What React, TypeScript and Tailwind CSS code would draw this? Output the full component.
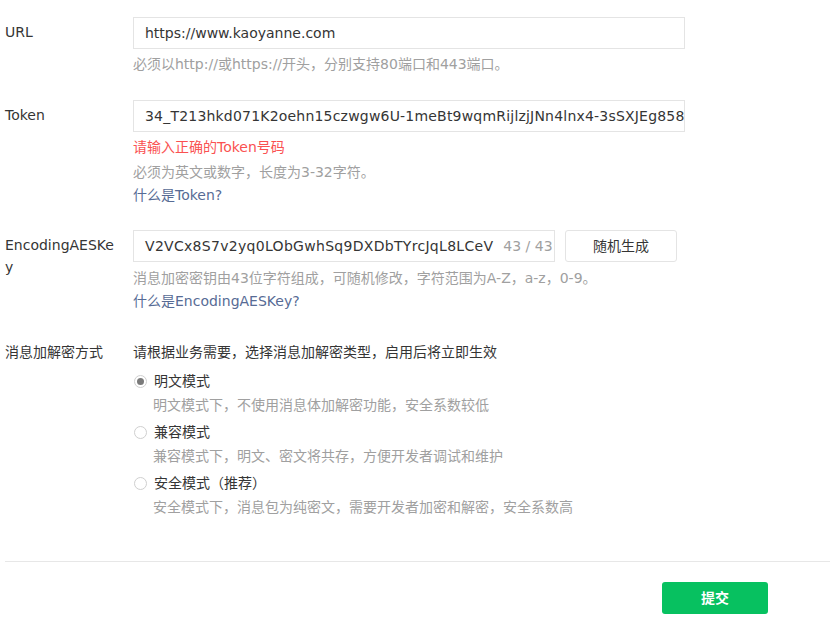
const font = { fontFamily: '"DejaVu Sans", "Noto Sans CJK SC", sans-serif' }

const modes = [
  { label: '明文模式', desc: '明文模式下，不使用消息体加解密功能，安全系数较低', checked: true },
  { label: '兼容模式', desc: '兼容模式下，明文、密文将共存，方便开发者调试和维护', checked: false },
  { label: '安全模式（推荐）', desc: '安全模式下，消息包为纯密文，需要开发者加密和解密，安全系数高', checked: false },
]

function Radio({ checked }: { checked: boolean }) {
  return (
    <span className="flex h-[13px] w-[13px] items-center justify-center rounded-full border border-[#cfcfcf] bg-white">
      {checked && <span className="h-[7px] w-[7px] rounded-full bg-[#7a7a7a]" />}
    </span>
  )
}

function Row({ label, children, className = '' }: { label: React.ReactNode; children: React.ReactNode; className?: string }) {
  return (
    <div className={`flex ${className}`}>
      <div className="w-[128px] shrink-0 pr-4 text-[14px] leading-[22px] text-[#353535] break-all">{label}</div>
      <div className="flex-1">{children}</div>
    </div>
  )
}

export default function App() {
  return (
    <div style={font} className="w-[830px] h-[628px] bg-white pl-[5px] pt-[17px] text-[14px] text-[#353535]">
      <Row label={<div className="pt-[4px]">URL</div>}>
        <div className="flex h-[32px] w-[552px] items-center border border-[#e4e4e4] px-[11px] text-[14px]">
          https://www.kaoyanne.com
        </div>
        <p className="mt-[4px] leading-[22px] text-[#a0a0a0]">必须以http://或https://开头，分别支持80端口和443端口。</p>
      </Row>

      <Row label={<div className="pt-[4px]">Token</div>} className="mt-[25px]">
        <div className="flex h-[32px] w-[552px] items-center overflow-hidden whitespace-nowrap border border-[#e4e4e4] px-[11px] tracking-[0.2px]">
          34_T213hkd071K2oehn15czwgw6U-1meBt9wqmRijlzjJNn4lnx4-3sSXJEg858
        </div>
        <p className="mt-[4px] leading-[22px] text-[#fa5151]">请输入正确的Token号码</p>
        <p className="mt-[3px] leading-[22px] text-[#a0a0a0]">必须为英文或数字，长度为3-32字符。</p>
        <p className="mt-[1px] leading-[22px] text-[#576b95]">什么是Token?</p>
      </Row>

      <Row label={<div className="pt-[4px] break-all">EncodingAESKey</div>} className="mt-[24px]">
        <div className="flex items-center gap-[10px]">
          <div className="flex h-[32px] w-[422px] items-center overflow-hidden whitespace-nowrap border border-[#e4e4e4] pl-[11px]">
            <span className="tracking-[0.3px]">V2VCx8S7v2yq0LObGwhSq9DXDbTYrcJqL8LCeV</span>
            <span className="ml-[10px] text-[#a0a0a0]">43 / 43</span>
          </div>
          <button className="h-[32px] w-[112px] rounded-[3px] border border-[#e4e4e4] bg-white text-[14px] text-[#353535]">随机生成</button>
        </div>
        <p className="mt-[5px] leading-[22px] text-[#a0a0a0]">消息加密密钥由43位字符组成，可随机修改，字符范围为A-Z，a-z，0-9。</p>
        <p className="mt-[1px] leading-[22px] text-[#576b95]">什么是EncodingAESKey?</p>
      </Row>

      <Row label="消息加解密方式" className="mt-[29px]">
        <p className="leading-[22px]">请根据业务需要，选择消息加解密类型，启用后将立即生效</p>
        <div className="mt-[7px] flex flex-col">
          {modes.map(m => (
            <div key={m.label} className="mb-[5px]">
              <div className="flex items-center gap-[7px] pl-[1px] leading-[22px]">
                <Radio checked={m.checked} />
                <span>{m.label}</span>
              </div>
              <p className="mt-[2px] pl-[20px] leading-[22px] text-[#a0a0a0]">{m.desc}</p>
            </div>
          ))}
        </div>
      </Row>

      <div className="mt-[38px] border-t border-[#e7e7e7]" />
      <div className="flex justify-end pr-[62px] pt-[20px]">
        <button className="h-[32px] w-[106px] rounded-[3px] bg-[#07c160] text-[14px] font-bold text-white">提交</button>
      </div>
    </div>
  )
}
